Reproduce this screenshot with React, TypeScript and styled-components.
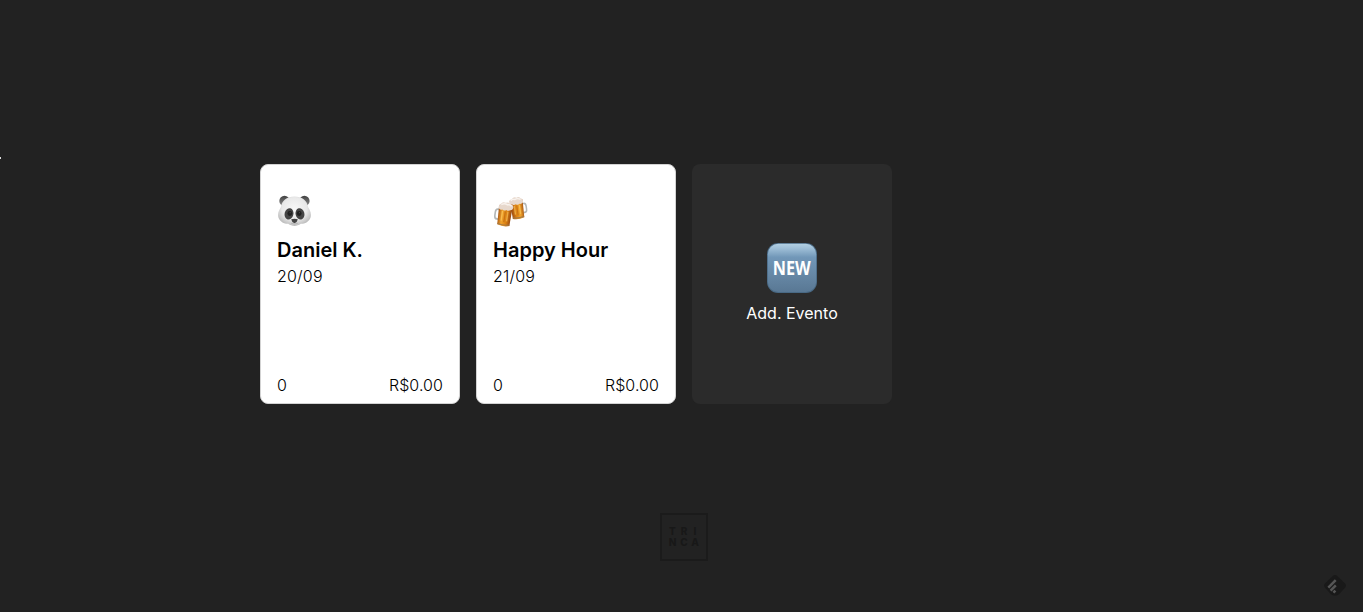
import React from "react";
import styled, { createGlobalStyle } from "styled-components";

const GlobalStyle = createGlobalStyle`
  * { box-sizing: border-box; }
  body {
    margin: 0;
    background: #222;
    color: #000;
    font-family: Inter, "Liberation Sans", sans-serif;
    font-size: 16px;
    overflow: hidden;
  }
`;

const Page = styled.main`
  position: relative;
  display: flex;
  flex-direction: column;
  align-items: center;
  height: 612px;
  padding: 164px 0 0 5px;
`;

const Board = styled.section`
  display: grid;
  grid-template-columns: repeat(4, 200px);
  gap: 16px;
  width: 848px;
`;

const Card = styled.article`
  display: flex;
  flex-direction: column;
  height: 240px;
  padding: 28px 16px 7px;
  border: 1px solid #d3d3d3;
  border-radius: 8px;
  background: #fff;
`;

const CardIcon = styled.svg`
  display: block;
  width: 36px;
  height: 36px;
`;

const Title = styled.h2`
  margin: 7px 0 0;
  font-size: 20px;
  font-weight: 600;
  line-height: 28px;
`;

const DateText = styled.time`
  font-weight: 300;
  line-height: 24px;
  letter-spacing: 0.2px;
`;

const Totals = styled.footer`
  display: flex;
  justify-content: space-between;
  margin-top: auto;
  font-weight: 300;
  line-height: 22px;
  letter-spacing: 0.08px;
`;

const AddCard = styled.button`
  display: flex;
  flex-direction: column;
  align-items: center;
  height: 240px;
  padding: 79px 0 0;
  border: 0;
  border-radius: 8px;
  background: #2b2b2b;
  color: #fff;
  font: 400 16px/24px Inter, "Liberation Sans", sans-serif;
`;

const NewBadge = styled.svg`
  display: block;
  width: 50px;
  height: 50px;
  margin-bottom: 8px;
`;

const Logo = styled.svg`
  display: block;
  width: 48px;
  height: 48px;
  margin-top: 109px;
`;

const EdgeMark = styled.span`
  position: absolute;
  left: 0;
  top: 157px;
  width: 1px;
  height: 2px;
  background: #ddd;
`;

const Floating = styled.svg`
  position: absolute;
  left: 1322px;
  top: 573px;
  width: 26px;
  height: 26px;
`;

function Panda() {
  return (
    <CardIcon viewBox="0 0 36 36" aria-label="Panda">
      <defs>
        <radialGradient id="face" cx=".5" cy=".42" r=".58">
          <stop offset="0" stopColor="#f7f7f7" />
          <stop offset=".65" stopColor="#e9e9e9" />
          <stop offset="1" stopColor="#bdbdbd" />
        </radialGradient>
        <linearGradient id="ear" x2="0" y2="1">
          <stop stopColor="#414141" />
          <stop offset="1" stopColor="#8b8b8b" />
        </linearGradient>
      </defs>
      <g transform="translate(0 -.8)">
        <circle cx="7.5" cy="8.7" r="5.2" fill="url(#ear)" />
        <circle cx="27.4" cy="8.7" r="5.2" fill="url(#ear)" />
        <path d="M17.5 4.3C25 4.3 30 8 31.2 15c1 2.2 2.7 4.1 2.7 7.7 0 5.3-4.4 8.7-10.1 8.9-1.9 1.3-4 2.1-6.3 2.1s-4.4-.8-6.3-2.1C5.5 31.4 1.1 28 1.1 22.7c0-3.6 1.7-5.5 2.7-7.7C5 8 10 4.3 17.5 4.3Z" fill="url(#face)" />
        <ellipse cx="12" cy="21.7" rx="4.4" ry="5.7" transform="rotate(14 12 21.7)" fill="#444" />
        <ellipse cx="23" cy="21.7" rx="4.4" ry="5.7" transform="rotate(-14 23 21.7)" fill="#444" />
        <circle cx="12.8" cy="21.3" r="2.4" fill="#202020" />
        <circle cx="22.2" cy="21.3" r="2.4" fill="#202020" />
        <circle cx="13.1" cy="20.5" r=".45" fill="#777" />
        <circle cx="22.5" cy="20.5" r=".45" fill="#777" />
        <path d="M14.2 27.1q3.3-1.3 6.6 0-.5 3-3.3 3.9-2.8-.9-3.3-3.9Z" fill="#444" />
        <path d="M14 31q3.5 1.6 7 0" fill="none" stroke="#aaa" strokeWidth=".7" />
      </g>
    </CardIcon>
  );
}

function Mug() {
  return (
    <>
      <path d="M4.2 8H2.5Q.2 8 .2 11v3q0 3 2.3 3h1.7" fill="none" stroke="#b4b7b7" strokeWidth="1.6" />
      <path d="M3 4h13.4l-.7 17.8q-6 1.8-12 0Z" fill="url(#beer)" />
      <path d="M7 9v9M12.4 9v9" stroke="#ffd06a" strokeWidth="1.4" opacity=".55" />
      <path d="M9.8 9v10" stroke="#bd6810" strokeWidth="1.2" opacity=".7" />
      <path d="M3.8 20.8q6 1.7 11.9 0" fill="none" stroke="#a57a45" strokeWidth="1.1" />
      <path d="M3 7Q1.8 3.7 4.8 2.5 6.4.2 9 1.3q3-1.5 5 .8 3.7.3 2.9 3.5-.4 2-2.7 1.8-1.9 1.4-3.6.2-2 1.7-3.8.2Q5 8.6 3 7Z" fill="#e7d8cc" />
      <path d="M5 3.5q3-2 6-.6 3-1 4.2.8" fill="none" stroke="#f8f2ed" strokeWidth="1.4" />
    </>
  );
}

function Beers() {
  return (
    <CardIcon viewBox="0 0 36 36" aria-label="Beer mugs">
      <defs>
        <linearGradient id="beer">
          <stop stopColor="#a65310" />
          <stop offset=".3" stopColor="#f0a42d" />
          <stop offset=".65" stopColor="#dc8112" />
          <stop offset="1" stopColor="#954610" />
        </linearGradient>
      </defs>
      <g transform="translate(31.8 2.2) rotate(-8) scale(-.96 1)"><Mug /></g>
      <g transform="translate(3.8 7.1) rotate(8) scale(1.02 1.1)"><Mug /></g>
    </CardIcon>
  );
}

function NewIcon() {
  return (
    <NewBadge viewBox="0 0 50 50" aria-label="New">
      <defs>
        <linearGradient id="badge" x2="0" y2="1">
          <stop stopColor="#b3d0e3" />
          <stop offset=".09" stopColor="#a0c0d8" />
          <stop offset=".28" stopColor="#7197b8" />
          <stop offset=".65" stopColor="#6687a5" />
          <stop offset="1" stopColor="#597894" />
        </linearGradient>
      </defs>
      <rect width="50" height="50" rx="11" fill="#496984" />
      <rect x=".8" y=".7" width="48.4" height="48.3" rx="10.5" fill="url(#badge)" />
      <text x="24.8" y="32" textAnchor="middle" textLength="38" lengthAdjust="spacingAndGlyphs" fill="#fff" fontFamily="Open Sans" fontSize="18.8" fontWeight="700">NEW</text>
    </NewBadge>
  );
}

const events = [
  { title: "Daniel K.", date: "20/09", icon: <Panda /> },
  { title: "Happy Hour", date: "21/09", icon: <Beers /> },
];

export default function App() {
  return (
    <>
      <GlobalStyle />
      <Page>
        <Board>
          {events.map(({ title, date, icon }) => (
            <Card key={title}>
              {icon}
              <Title>{title}</Title>
              <DateText>{date}</DateText>
              <Totals><span>0</span><span>R$0.00</span></Totals>
            </Card>
          ))}
          <AddCard><NewIcon />Add. Evento</AddCard>
        </Board>
        <Logo viewBox="0 0 48 48" aria-label="Trinca">
          <rect x="1" y="1" width="46" height="46" fill="none" stroke="#1b1b1b" strokeWidth="2" />
          <g fill="#181818" fontFamily="Inter" fontSize="10" fontWeight="800" textAnchor="middle">
            <text x="12.5" y="22">T</text><text x="24" y="22">R</text><text x="35" y="22">I</text>
            <text x="12.5" y="33">N</text><text x="24" y="33">C</text><text x="35" y="33">A</text>
          </g>
        </Logo>
        <EdgeMark />
        <Floating viewBox="0 0 26 26" aria-hidden="true">
          <path d="M10.5 3.2q2.5-2.2 5 0l7.5 7.3q2 2 0 4.2l-6 6.6q-1.5 1.4-4 1.4t-4-1.4l-6-6.6q-2-2.2 0-4.2Z" fill="#191919" />
          <path d="m6.3 14.6 7.4-7.4M8.6 17.6l5.2-5.2M11.4 19.7l2-2" fill="none" stroke="#555" strokeWidth="2.5" />
        </Floating>
      </Page>
    </>
  );
}
